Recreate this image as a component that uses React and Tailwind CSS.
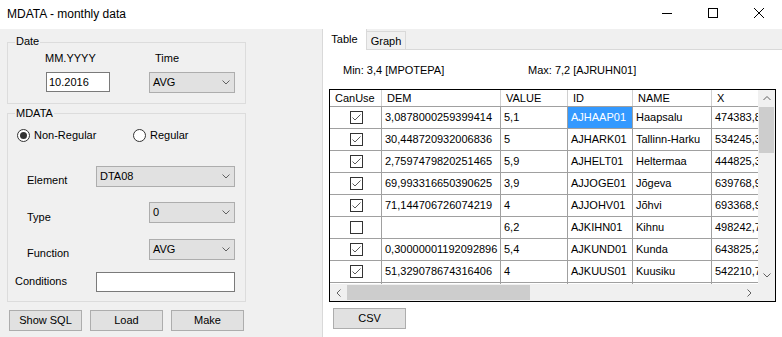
import React from 'react';

function Chev({ dir = 'down', color = '#606060' }) {
  if (dir === 'down' || dir === 'up') {
    const d = dir === 'down' ? 'M0.5 0.5 L4 4 L7.5 0.5' : 'M0.5 4 L4 0.5 L7.5 4';
    return (
      <svg width="8" height="5" viewBox="0 0 8 5" className="block">
        <path d={d} stroke={color} fill="none" strokeWidth="1" />
      </svg>
    );
  }
  const d = dir === 'left' ? 'M4.5 0.5 L1 4 L4.5 7.5' : 'M0.5 0.5 L4 4 L0.5 7.5';
  return (
    <svg width="5" height="8" viewBox="0 0 5 8" className="block">
      <path d={d} stroke={color} fill="none" strokeWidth="1" />
    </svg>
  );
}

function Combo({ value, w }) {
  return (
    <div className={w + ' h-[21px] shrink-0 bg-[#e1e1e1] border border-[#adadad] flex items-center justify-between pl-[3px] pr-[4px]'}>
      <span>{value}</span>
      <Chev />
    </div>
  );
}

function Check({ checked }) {
  return (
    <div className="w-[13px] h-[13px] border border-[#333333] bg-white flex items-center justify-center">
      {checked && (
        <svg width="11" height="11" viewBox="0 0 11 11" className="block">
          <path d="M1.5 5.5 L4 8 L9.5 2.5" stroke="#5a5a5a" fill="none" strokeWidth="1" />
        </svg>
      )}
    </div>
  );
}

function Radio({ checked }) {
  return (
    <div className="w-[13px] h-[13px] rounded-full border border-[#333333] bg-white flex items-center justify-center shrink-0">
      {checked && <div className="w-[7px] h-[7px] rounded-full bg-[#333333]" />}
    </div>
  );
}

function Btn({ children, w }) {
  return (
    <div className={w + ' h-[21px] shrink-0 bg-[#e1e1e1] border border-[#adadad] flex items-center justify-center'}>
      {children}
    </div>
  );
}

const rows = [
  { c: true, dem: '3,0878000259399414', v: '5,1', id: 'AJHAAP01', name: 'Haapsalu', x: '474383,85' },
  { c: true, dem: '30,448720932006836', v: '5', id: 'AJHARK01', name: 'Tallinn-Harku', x: '534245,35' },
  { c: true, dem: '2,7597479820251465', v: '5,9', id: 'AJHELT01', name: 'Heltermaa', x: '444825,35' },
  { c: true, dem: '69,993316650390625', v: '3,9', id: 'AJJOGE01', name: 'Jõgeva', x: '639768,95' },
  { c: true, dem: '71,144706726074219', v: '4', id: 'AJJOHV01', name: 'Jõhvi', x: '693368,95' },
  { c: false, dem: '', v: '6,2', id: 'AJKIHN01', name: 'Kihnu', x: '498242,75' },
  { c: true, dem: '0,30000001192092896', v: '5,4', id: 'AJKUND01', name: 'Kunda', x: '643825,25' },
  { c: true, dem: '51,329078674316406', v: '4', id: 'AJKUUS01', name: 'Kuusiku', x: '542210,75' },
  { c: null, dem: '', v: '', id: '', name: '', x: '' },
];

const cell = 'shrink-0 border-r border-[#a0a0a0] flex items-center pl-[3px] overflow-hidden whitespace-nowrap';

function Row({ r, sel }) {
  return (
    <div className="flex h-[22px] shrink-0 border-b border-[#a0a0a0] bg-white">
      <div className="w-[52px] shrink-0 border-r border-[#a0a0a0] flex items-center justify-center pl-[1px]">
        {r.c !== null && <Check checked={r.c} />}
      </div>
      <div className={'w-[119px] ' + cell}>{r.dem}</div>
      <div className={'w-[67px] ' + cell}>{r.v}</div>
      <div className={'w-[65px] ' + cell + (sel ? ' bg-[#3399ff] text-white' : '')}>{r.id}</div>
      <div className={'w-[79px] ' + cell}>{r.name}</div>
      <div className={'w-[110px] ' + cell}>{r.x}</div>
    </div>
  );
}

const hcell = 'shrink-0 border-r border-[#d0d0d0] flex items-center pl-[5px] whitespace-nowrap';

export default function App() {
  return (
    <div className="font-['Liberation_Sans',Arial,sans-serif] text-[11px] leading-[13px] text-black w-[782px] h-[337px] overflow-hidden bg-[#f0f0f0] flex flex-col">
      {/* Title bar */}
      <div className="h-[29px] shrink-0 bg-white flex">
        <div className="flex-1 flex items-center pl-[7px] text-[12px] leading-[15px]">MDATA - monthly data</div>
        <div className="w-[46px] h-full flex justify-center pt-[13px]">
          <div className="w-[10px] h-px bg-black" />
        </div>
        <div className="w-[46px] h-full flex justify-center pt-[8px]">
          <div className="w-[10px] h-[10px] border border-black" />
        </div>
        <div className="w-[46px] h-full flex justify-center pt-[8px]">
          <svg width="10" height="10" viewBox="0 0 10 10" className="block">
            <path d="M0 0 L10 10 M10 0 L0 10" stroke="#000" strokeWidth="1" />
          </svg>
        </div>
      </div>

      <div className="flex flex-1 min-h-0">
        {/* Left panel */}
        <div className="w-[322px] shrink-0 flex flex-col">
          {/* Date group */}
          <div className="relative ml-[7px] mt-[13px] w-[239px] h-[62px] shrink-0 border border-[#dcdcdc]">
            <span className="absolute left-[7px] -top-[8px] px-[1px] bg-[#f0f0f0]">Date</span>
            <div className="flex pt-[9px]">
              <span className="ml-[37px] w-[110px]">MM.YYYY</span>
              <span>Time</span>
            </div>
            <div className="flex mt-[7px]">
              <div className="ml-[38px] w-[64px] h-[20px] bg-white border border-[#7a7a7a] flex items-center pl-[2px]">10.2016</div>
              <div className="ml-[39px]">
                <Combo value="AVG" w="w-[86px]" />
              </div>
            </div>
          </div>

          {/* MDATA group */}
          <div className="relative ml-[7px] mt-[9px] w-[239px] h-[189px] shrink-0 border border-[#dcdcdc]">
            <span className="absolute left-[7px] -top-[7px] px-[1px] bg-[#f0f0f0]">MDATA</span>
            <div className="flex items-center h-[13px] mt-[15px] ml-[9px]">
              <div className="flex items-center w-[116px]">
                <Radio checked />
                <span className="ml-[4px]">Non-Regular</span>
              </div>
              <div className="flex items-center">
                <Radio />
                <span className="ml-[4px]">Regular</span>
              </div>
            </div>
            <div className="flex mt-[24px]">
              <span className="ml-[19px] w-[69px] mt-[8px]">Element</span>
              <Combo value="DTA08" w="w-[139px]" />
            </div>
            <div className="flex mt-[15px]">
              <span className="ml-[19px] w-[122px] mt-[9px]">Type</span>
              <Combo value="0" w="w-[86px]" />
            </div>
            <div className="flex mt-[15px]">
              <span className="ml-[19px] w-[122px] mt-[8px]">Function</span>
              <Combo value="AVG" w="w-[86px]" />
            </div>
            <div className="flex mt-[12px]">
              <span className="ml-[7px] w-[81px] mt-[3px]">Conditions</span>
              <div className="w-[139px] h-[20px] bg-white border border-[#7a7a7a]" />
            </div>
          </div>

          {/* Buttons */}
          <div className="flex gap-[8px] ml-[9px] mt-[8px]">
            <Btn w="w-[73px]">Show SQL</Btn>
            <Btn w="w-[73px]">Load</Btn>
            <Btn w="w-[73px]">Make</Btn>
          </div>
        </div>

        {/* Right panel: tabs */}
        <div className="flex-1 flex flex-col min-w-0">
          <div className="flex h-[20px] shrink-0 items-end">
            <div className="relative z-10 -mb-px w-[45px] h-[21px] bg-white border-l border-r border-[#d9d9d9] flex justify-center pt-[4px]">
              Table
            </div>
            <div className="w-[39px] h-[18px] bg-[#f0f0f0] border-t border-r border-[#d9d9d9] flex justify-center pt-[3px]">
              Graph
            </div>
          </div>
          <div className="flex-1 bg-white border-t border-l border-[#d9d9d9] flex flex-col">
            <div className="flex pt-[14px] pl-[20px] h-[27px] shrink-0">
              <span className="w-[185px]">Min: 3,4 [MPOTEPA]</span>
              <span>Max: 7,2 [AJRUHN01]</span>
            </div>
            {/* Grid */}
            <div className="ml-[6px] mt-[12px] w-[447px] h-[213px] shrink-0 border border-black flex flex-col bg-white">
              <div className="flex h-[194px] shrink-0">
                <div className="w-[428px] shrink-0 overflow-hidden flex flex-col">
                  <div className="flex h-[17px] shrink-0 border-b border-[#a0a0a0] bg-white">
                    <div className={'w-[52px] ' + hcell}>CanUse</div>
                    <div className={'w-[119px] ' + hcell}>DEM</div>
                    <div className={'w-[67px] ' + hcell}>VALUE</div>
                    <div className={'w-[65px] ' + hcell}>ID</div>
                    <div className={'w-[79px] ' + hcell}>NAME</div>
                    <div className={'w-[110px] ' + hcell}>X</div>
                  </div>
                  {rows.map((r, i) => (
                    <Row key={i} r={r} sel={i === 0} />
                  ))}
                </div>
                {/* vertical scrollbar */}
                <div className="w-[17px] shrink-0 bg-[#f0f0f0] flex flex-col">
                  <div className="h-[17px] flex items-center justify-center">
                    <Chev dir="up" />
                  </div>
                  <div className="mx-[1px] h-[46px] bg-[#cdcdcd]" />
                  <div className="flex-1" />
                  <div className="h-[17px] flex items-center justify-center">
                    <Chev dir="down" />
                  </div>
                </div>
              </div>
              <div className="flex h-[17px] shrink-0">
                <div className="w-[428px] shrink-0 bg-[#f0f0f0] flex items-center">
                  <div className="w-[17px] h-full flex items-center justify-center">
                    <Chev dir="left" />
                  </div>
                  <div className="w-[183px] h-[15px] bg-[#cdcdcd]" />
                  <div className="flex-1" />
                  <div className="w-[17px] h-full flex items-center justify-center">
                    <Chev dir="right" />
                  </div>
                </div>
                <div className="w-[17px] shrink-0 bg-[#f0f0f0]" />
              </div>
            </div>
            <div className="ml-[10px] mt-[6px]">
              <Btn w="w-[73px]">CSV</Btn>
            </div>
          </div>
        </div>
      </div>
    </div>
  );
}
